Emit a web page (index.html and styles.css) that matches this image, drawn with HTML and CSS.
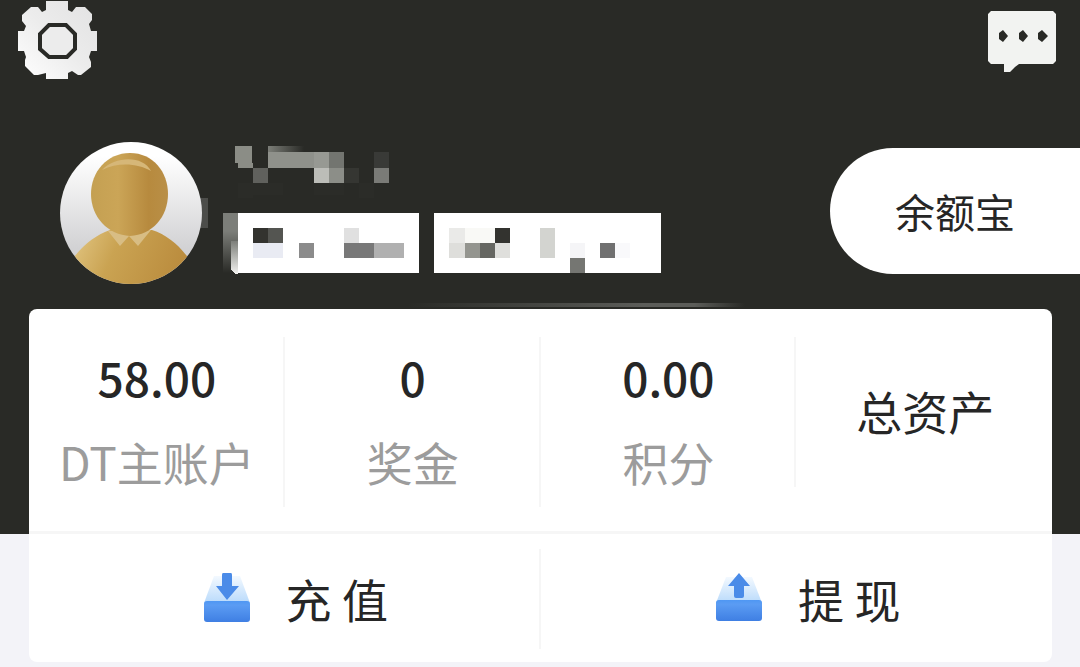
FILE: index.html
```html
<!DOCTYPE html>
<html lang="zh-CN">

<head>
    <meta charset="UTF-8">
    <meta name="viewport" content="width=device-width, initial-scale=1.0">
    <title>我的账户</title>
    <link rel="stylesheet" href="styles.css">
</head>

<body>
    <header class="header">
        <!-- 顶部图标 -->
        <div class="top-bar">
            <button type="button" class="icon-btn" aria-label="设置">
                <svg width="79" height="79" viewBox="0 0 79 79">
                    <defs>
                        <linearGradient id="silver" x1="0" y1="1" x2="1" y2="0">
                            <stop offset="0" stop-color="#ffffff" />
                            <stop offset="0.5" stop-color="#ececec" />
                            <stop offset="1" stop-color="#e2e2e2" />
                        </linearGradient>
                    </defs>
                    <path fill="url(#silver)" d="M28 0H50V9L54 11L58 6H67L74 13V19L71 23L73 30H79V50H73L71 56L73 61V66L63 74H60L54 70L50 72V78H28V72L20 74H16L7 65V59L8 56L6 50H0V30H6L8 25L4 20V14L13 6H20L24 11L28 9Z" />
                    <path fill="#ececec" stroke="#292a26" stroke-width="4" d="M31 24H48L57 33V48L49 56H31L22 48V33Z" />
                </svg>
            </button>
            <button type="button" class="icon-btn message" aria-label="消息">
                <svg width="68" height="62" viewBox="0 0 68 62">
                    <path fill="#f2f3f1" d="M3 0H65L68 3V50L65 53H31L27 56L22 61H16V53H3L0 50V3Z" />
                    <path fill="#292a26" d="M11 22L15 19L20 25L15 31L11 28ZM31 22L35 19L40 25L35 31L31 28ZM50 22L54 19L60 25L54 31L50 28Z" />
                </svg>
            </button>
        </div>

        <!-- 用户信息 -->
        <div class="profile">
            <svg class="avatar" width="148" height="142" viewBox="0 0 148 142" role="img" aria-label="头像">
                <defs>
                    <linearGradient id="avatarBg" x1="0" y1="0" x2="0" y2="1">
                        <stop offset="0.1" stop-color="#ffffff" />
                        <stop offset="0.75" stop-color="#d2d2d4" />
                    </linearGradient>
                    <linearGradient id="gold">
                        <stop offset="0" stop-color="#c4a052" />
                        <stop offset="0.35" stop-color="#cba557" />
                        <stop offset="0.75" stop-color="#b78a3e" />
                        <stop offset="1" stop-color="#b98f47" />
                    </linearGradient>
                    <linearGradient id="body" x1="0" y1="0.4" x2="1" y2="0.6">
                        <stop offset="0" stop-color="#dfc27d" />
                        <stop offset="0.35" stop-color="#caa352" />
                        <stop offset="1" stop-color="#b98a3c" />
                    </linearGradient>
                    <clipPath id="round">
                        <circle cx="71" cy="71" r="71" />
                    </clipPath>
                </defs>
                <path fill="#4c4d4a" d="M134 56H148V86H134Z" />
                <g clip-path="url(#round)">
                    <rect width="142" height="142" fill="url(#avatarBg)" />
                    <path fill="url(#body)" d="M10 120C24 102 34 94 50 88H92C107 93 118 102 130 118V142H10Z" />
                    <path fill="#d8bd84" d="M48 89L60 104L69 94L78 104L91 88Z" />
                    <path fill="url(#gold)" d="M70 11C93 11 108 30 108 52C108 75 92 93 70 94C48 93 31 75 31 52C31 30 47 11 70 11Z" />
                    <path fill="#d6b778" d="M42 28C55 14 83 13 91 29C77 21 58 20 42 28Z" />
                </g>
            </svg>

            <div class="info">
                <!-- 打码的昵称 -->
                <svg width="170" height="60" viewBox="0 0 170 60" shape-rendering="crispEdges" role="img" aria-label="昵称">
                    <defs>
                        <linearGradient id="nameFade">
                            <stop offset="0" stop-color="#7c7e78" />
                            <stop offset="1" stop-color="#292a26" />
                        </linearGradient>
                    </defs>
                    <path fill="#8b8d86" d="M12 4H29V21H30V26H15V21H12Z" />
                    <rect x="45" y="4" width="36" height="6" fill="url(#nameFade)" />
                    <rect x="45" y="10" width="46" height="16" fill="#8f918b" />
                    <rect x="91" y="10" width="15" height="16" fill="#979993" />
                    <rect x="106" y="10" width="15" height="16" fill="#737570" />
                    <rect x="151" y="10" width="15" height="16" fill="#393a37" />
                    <rect x="30" y="26" width="15" height="15" fill="#60615d" />
                    <rect x="91" y="26" width="15" height="15" fill="#bcbdb8" />
                    <rect x="106" y="26" width="15" height="15" fill="#8c8e88" />
                    <rect x="121" y="26" width="15" height="15" fill="#353632" />
                    <rect x="151" y="26" width="15" height="15" fill="#7a7b77" />
                    <path fill="#2b2c28" d="M15 41H30V56H15ZM30 41H60V53H30ZM91 41H121V53H91ZM136 41H151V56H136Z" />
                </svg>

                <!-- 打码的标签 -->
                <div class="tags">
                    <svg width="196" height="61" viewBox="0 0 196 61" shape-rendering="crispEdges" role="img" aria-label="标签一">
                        <defs>
                            <linearGradient id="tagFade" x1="0" y1="0" x2="0" y2="1">
                                <stop offset="0.3" stop-color="#7c7e79" />
                                <stop offset="1" stop-color="#292a26" />
                            </linearGradient>
                            <linearGradient id="tagEdge" x1="0" y1="0" x2="0" y2="1">
                                <stop offset="0" stop-color="#7c7e79" />
                                <stop offset="1" stop-color="#f2f2ef" />
                            </linearGradient>
                        </defs>
                        <rect width="15" height="60" fill="url(#tagFade)" />
                        <path fill="url(#tagEdge)" d="M8 28H15V61H12L8 57Z" />
                        <rect x="15" width="181" height="60" fill="#ffffff" />
                        <rect x="30" y="15" width="15" height="15" fill="#33332f" />
                        <rect x="45" y="15" width="15" height="15" fill="#545551" />
                        <rect x="30" y="30" width="30" height="15" fill="#e9ebf3" />
                        <rect x="76" y="30" width="15" height="15" fill="#8b8b8b" />
                        <rect x="121" y="15" width="15" height="15" fill="#e0e0e0" />
                        <rect x="121" y="30" width="30" height="15" fill="#787878" />
                        <rect x="151" y="30" width="30" height="15" fill="#b0b0b0" />
                    </svg>
                    <svg width="227" height="60" viewBox="0 0 227 60" shape-rendering="crispEdges" role="img" aria-label="标签二">
                        <rect width="227" height="60" fill="#ffffff" />
                        <rect x="15" y="15" width="16" height="15" fill="#eaeae8" />
                        <rect x="31" y="15" width="30" height="15" fill="#f9f9f6" />
                        <rect x="61" y="15" width="15" height="15" fill="#33332f" />
                        <rect x="15" y="30" width="16" height="15" fill="#dededb" />
                        <rect x="31" y="30" width="15" height="15" fill="#94958f" />
                        <rect x="46" y="30" width="15" height="15" fill="#666762" />
                        <rect x="61" y="30" width="15" height="15" fill="#dfdfdc" />
                        <rect x="106" y="15" width="15" height="30" fill="#d3d4d0" />
                        <rect x="136" y="30" width="15" height="15" fill="#f5f5f7" />
                        <rect x="136" y="45" width="15" height="15" fill="#757672" />
                        <rect x="166" y="30" width="15" height="15" fill="#707070" />
                        <rect x="181" y="30" width="15" height="15" fill="#f9f9fb" />
                    </svg>
                </div>
            </div>

            <button type="button" class="balance-btn">余额宝</button>
        </div>
    </header>

    <!-- 资产卡片 -->
    <main class="card">
        <div class="stats">
            <div class="stat">
                <strong class="stat-value">58.00</strong>
                <span class="stat-label">DT主账户</span>
            </div>
            <div class="stat">
                <strong class="stat-value">0</strong>
                <span class="stat-label">奖金</span>
            </div>
            <div class="stat">
                <strong class="stat-value">0.00</strong>
                <span class="stat-label">积分</span>
            </div>
            <a href="#" class="total">总资产</a>
        </div>

        <div class="actions">
            <button type="button" class="action">
                <svg width="46" height="50" viewBox="0 0 46 50" aria-hidden="true">
                    <defs>
                        <linearGradient id="tray" x1="0" y1="0" x2="0" y2="1">
                            <stop offset="0" stop-color="#4f97f3" />
                            <stop offset="0.2" stop-color="#5b9cf3" />
                            <stop offset="1" stop-color="#3f7fe3" />
                        </linearGradient>
                        <linearGradient id="lid" x1="0" y1="0" x2="0" y2="1">
                            <stop offset="0" stop-color="#f3f9ff" />
                            <stop offset="1" stop-color="#b9dafb" />
                        </linearGradient>
                    </defs>
                    <path fill="url(#lid)" d="M10 3H36L46 30H0Z" />
                    <rect y="28" width="46" height="21" rx="3" fill="url(#tray)" />
                    <path fill="#4a8be8" d="M19 0H27Q28 0 28 2V13H35L23 27L12 13H18V2Q18 0 19 0Z" />
                </svg>
                <span>充 值</span>
            </button>
            <button type="button" class="action">
                <svg width="46" height="50" viewBox="0 0 46 50" aria-hidden="true">
                    <path fill="url(#lid)" d="M10 4H36L46 30H0Z" />
                    <rect y="27" width="46" height="21" rx="3" fill="url(#tray)" />
                    <path fill="#4a8be8" d="M23 0L34 13H28V23Q28 25 26 25H20Q18 25 18 23V13H12Z" />
                </svg>
                <span>提 现</span>
            </button>
        </div>
    </main>
</body>

</html>
```

FILE: styles.css
```css
:root {
    --dark: #292a26;
    --page: #f3f3f8;
    --line: #f6f6f6;
    --text: #262626;
    --muted: #9c9c9c;
}

* {
    margin: 0;
    padding: 0;
    box-sizing: border-box;
}

body {
    background: var(--page);
    color: var(--text);
    font-family: "Noto Sans CJK SC", sans-serif;
    font-size: 46px;
    line-height: 60px;
}

button {
    border: none;
    background: none;
    color: inherit;
    font: inherit;
    cursor: pointer;
}

svg {
    display: block;
    flex-shrink: 0;
}

/* 顶部深色区域 */
.header {
    padding-bottom: 250px;
    background: var(--dark);
}

.top-bar {
    display: flex;
    justify-content: space-between;
    align-items: flex-start;
    padding: 1px 24px 0 18px;
}

.message {
    padding-top: 10px;
}

.profile {
    display: flex;
    align-items: flex-start;
    margin-top: 62px;
    padding-left: 60px;
}

.info {
    margin-left: 15px;
}

.tags {
    display: flex;
    gap: 15px;
    margin-top: 11px;
}

.balance-btn {
    width: 250px;
    margin-top: 6px;
    margin-left: auto;
    padding: 33px 0;
    border-radius: 63px 0 0 63px;
    background: #fff;
    font-size: 40px;
}

/* 资产卡片 */
.card {
    position: relative;
    margin: -225px 28px 5px 29px;
    border-radius: 8px;
    background: #fff;
}

/* 卡片上沿的反光 */
.card::before {
    content: "";
    position: absolute;
    top: -6px;
    left: 37%;
    width: 33%;
    height: 4px;
    background: linear-gradient(90deg, transparent, #5c5d59 70%, #5c5d59 85%, transparent);
}

.stats {
    display: grid;
    grid-template-columns: repeat(4, 1fr);
    padding: 28px 0 24px;
    border-bottom: 3px solid var(--line);
}

.stat {
    display: flex;
    flex-direction: column;
    align-items: center;
    gap: 24px;
    height: 170px;
    padding: 10px 0 0 2px;
    border-right: 2px solid var(--line);
}

.stat:nth-child(3) {
    height: 150px;
}

.stat-value {
    font-size: 46px;
    font-weight: 500;
}

.stat-label {
    color: var(--muted);
}

.total {
    padding: 43px 0 0 2px;
    color: inherit;
    text-align: center;
    text-decoration: none;
}

.actions {
    display: grid;
    grid-template-columns: 1fr 1fr;
    padding: 15px 0 13px;
}

.action {
    display: flex;
    justify-content: center;
    align-items: center;
    gap: 36px;
    padding: 19px 0 21px 24px;
}

.action:first-child {
    border-right: 2px solid var(--line);
}
```
